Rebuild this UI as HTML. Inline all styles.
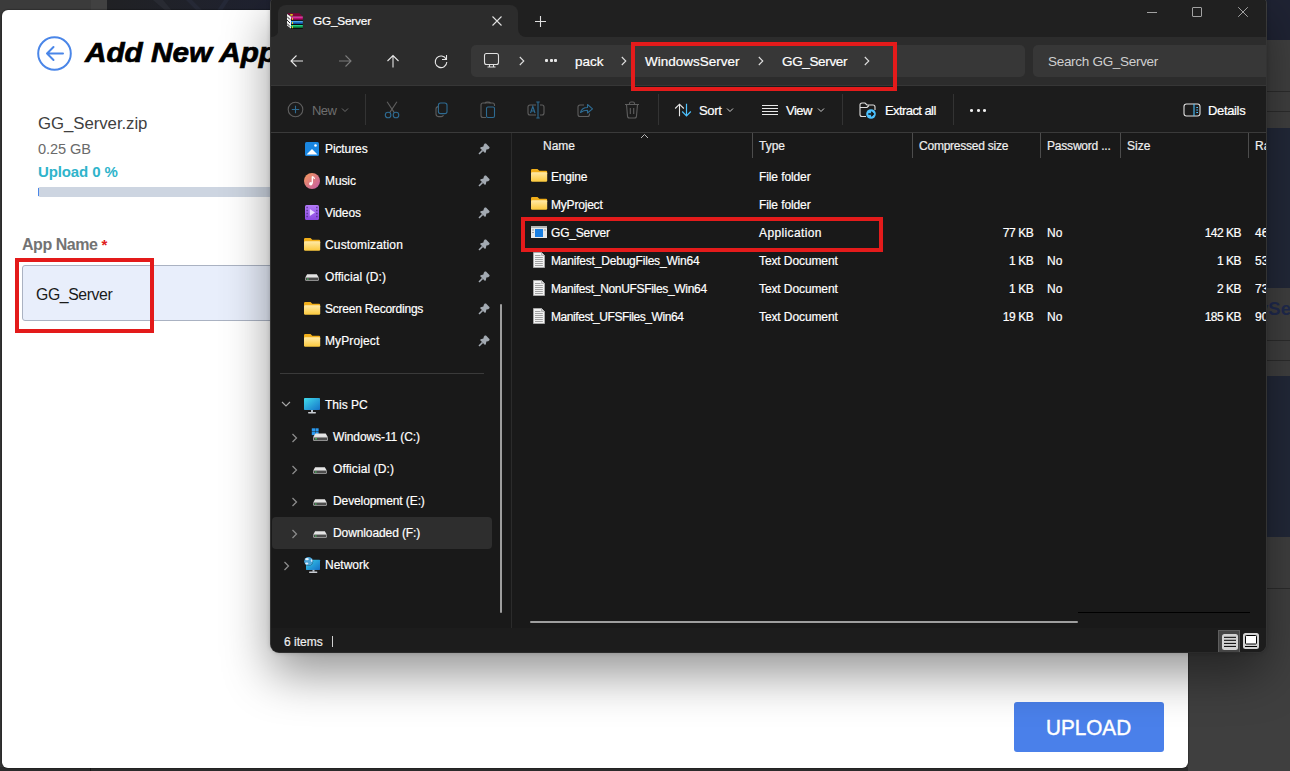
<!DOCTYPE html>
<html><head><meta charset="utf-8">
<style>
*{margin:0;padding:0;box-sizing:border-box}
html,body{width:1290px;height:771px;overflow:hidden;background:#3c3c3c;font-family:"Liberation Sans",sans-serif}
.a{position:absolute}
.t{position:absolute;white-space:nowrap;line-height:1}
#bgtop{left:107px;top:0;width:183px;height:20px;background:linear-gradient(90deg,#202124,#1f2232)}
#card{left:2px;top:10px;width:1186px;height:758px;background:#fff;border-radius:6px;overflow:hidden;box-shadow:0 0 1px 1px rgba(0,0,0,.22)}
#win{left:271px;top:-4px;width:995px;height:656px;background:#202020;border-radius:8px;overflow:hidden;box-shadow:0 22px 48px rgba(0,0,0,.42),0 0 5px rgba(0,0,0,.25),0 0 0 1px #484848}
.w{color:#fff;-webkit-text-stroke:0.2px #fff}
</style></head><body>
<!-- page background bits -->
<div class="a" style="left:0;top:10px;width:2px;height:761px;background:#353535"></div>
<div class="a" style="left:0;top:767px;width:1188px;height:4px;background:#2b2b2b"></div>
<div class="a" style="left:90px;top:767px;width:1px;height:4px;background:#1a1a1a"></div>
<div class="a" style="left:0;top:0;width:91px;height:12px;background:#3b3b3b"></div>
<div class="a" style="left:91px;top:0;width:16px;height:12px;background:#414141"></div>
<div class="a" id="bgtop"></div>
<div class="a" style="left:1188px;top:0;width:102px;height:771px;background:#3f3f3f"></div>
<div class="a" style="left:1266px;top:0;width:24px;height:40px;background:#1f2333"></div>
<div class="a" style="left:1266px;top:128px;width:24px;height:160px;background:#222838"></div>
<div class="a" style="left:1266px;top:376px;width:24px;height:161px;background:#222838"></div>
<div class="a" style="left:1266px;top:91px;width:24px;height:1px;background:#2c2c2c"></div>
<div class="a" style="left:1266px;top:111px;width:24px;height:1px;background:#2c2c2c"></div>
<div class="a" style="left:1266px;top:340px;width:24px;height:1px;background:#2c2c2c"></div>
<div class="a" style="left:1266px;top:360px;width:24px;height:1px;background:#2c2c2c"></div>
<div class="a" style="left:1266px;top:588px;width:24px;height:1px;background:#2c2c2c"></div>
<div class="t" style="left:1258px;top:300px;font-size:18.5px;font-weight:bold;color:#1f2a4e">ySe</div>
<svg class="a" style="left:107px;top:0" width="183" height="12" viewBox="0 0 183 12"><path d="M46 0H56L66 12H60Z" fill="#2a2d35" opacity="0.8"/><path d="M79 0H85L97 12H91Z" fill="#272a38" opacity="0.8"/><path d="M117 0H122L114 12H109Z" fill="#262a3a" opacity="0.8"/></svg>

<div class="a" id="card">
  <!-- back icon -->
  <svg class="a" style="left:35px;top:26px" width="36" height="36" viewBox="0 0 36 36">
    <circle cx="17.5" cy="17.5" r="16.3" fill="none" stroke="#4a86e8" stroke-width="2"/>
    <path d="M10 17.5H26M16.5 11L10 17.5L16.5 24" fill="none" stroke="#4a86e8" stroke-width="2" stroke-linecap="round" stroke-linejoin="round"/>
  </svg>
  <div class="t" style="left:83px;top:30px;font-size:27px;font-weight:bold;font-style:italic;color:#000;transform:scaleX(1.1);transform-origin:0 0;-webkit-text-stroke:0.7px #000">Add New App</div>
  <div class="t" style="left:36px;top:105.5px;font-size:16.8px;letter-spacing:-0.05px;color:#404040">GG_Server.zip</div>
  <div class="t" style="left:36px;top:131.5px;font-size:14.6px;letter-spacing:-0.1px;color:#6a6a6a">0.25 GB</div>
  <div class="t" style="left:36px;top:154px;font-size:15px;letter-spacing:-0.12px;font-weight:bold;color:#2fb4cb">Upload 0 %</div>
  <div class="a" style="left:36px;top:177px;width:300px;height:10px;background:#cdd5e1;border-radius:2px"></div>
  <div class="a" style="left:36px;top:178px;width:1.2px;height:8px;background:#4a86e8"></div>
  <div class="t" style="left:20px;top:227px;font-size:16px;letter-spacing:-0.45px;font-weight:bold;color:#737373">App Name <span style="color:#e02020;font-size:15px">*</span></div>
  <div class="a" style="left:20px;top:255px;width:400px;height:56px;background:#e8eefb;border:1px solid #aab2c2;border-radius:3px"></div>
  <div class="t" style="left:34px;top:277px;font-size:15.8px;letter-spacing:-0.4px;color:#1a1a1a">GG_Server</div>
  <div class="a" style="left:13px;top:248px;width:139px;height:75px;border:4px solid #e31a1a"></div>
  <div class="a" style="left:1012px;top:692px;width:150px;height:50px;background:#4a80ea;border-radius:3px"></div>
  <div class="t" style="left:1044px;top:706.5px;font-size:22.5px;color:#fff;-webkit-text-stroke:0.45px #fff;transform:scaleX(0.92);transform-origin:0 0">UPLOAD</div>
</div>

<div class="a" id="win"><div class="a" style="left:-271px;top:4px;width:1290px;height:771px">
<!-- title strip -->
<div class="a" style="left:270px;top:20px;width:996px;height:20px;background:#2c2c2c"></div>
<div class="a" style="left:270px;top:0;width:8.5px;height:37px;background:#202020;border-radius:0 0 8px 0"></div>
<div class="a" style="left:517.5px;top:0;width:749px;height:37px;background:#202020;border-radius:0 0 0 8px"></div>
<div class="a" style="left:270px;top:0;width:996px;height:5px;background:#202020"></div>
<div class="a" style="left:278px;top:5px;width:240px;height:33px;background:#2c2c2c;border-radius:8px 8px 0 0"></div>
<!-- tab icon winrar -->
<svg class="a" style="left:287px;top:13px" width="16" height="16" viewBox="0 0 16 16">
 <defs><linearGradient id="rp" x1="0" y1="0" x2="0" y2="1"><stop offset="0" stop-color="#ff70c8"/><stop offset="0.35" stop-color="#d01890"/><stop offset="1" stop-color="#700030"/></linearGradient>
 <linearGradient id="rb" x1="0" y1="0" x2="0" y2="1"><stop offset="0" stop-color="#80d0ff"/><stop offset="0.35" stop-color="#2080d8"/><stop offset="1" stop-color="#0a3a80"/></linearGradient>
 <linearGradient id="rg" x1="0" y1="0" x2="0" y2="1"><stop offset="0" stop-color="#40ffb0"/><stop offset="0.35" stop-color="#10b060"/><stop offset="1" stop-color="#085020"/></linearGradient></defs>
 <path d="M0.2 0.2H12.3L15.8 3.6H4Z" fill="#80003a"/>
 <ellipse cx="4.5" cy="1.8" rx="1.6" ry="0.9" fill="#d8d020"/>
 <rect x="4" y="3.6" width="11.8" height="3.4" fill="url(#rp)"/>
 <rect x="4" y="7" width="11.8" height="0.9" fill="#000"/>
 <rect x="4" y="7.9" width="11.8" height="3.3" fill="url(#rb)"/>
 <rect x="4" y="11.2" width="11.8" height="0.9" fill="#000"/>
 <rect x="4" y="12.1" width="11.8" height="3.2" fill="url(#rg)"/>
 <rect x="4" y="15.3" width="11.8" height="0.7" fill="#000"/>
 <path d="M0 1L4 3.8V15.5L0 12.5Z" fill="#f4f4f4"/>
 <path d="M0 3.5L3 6.5M0 7L3 10M0 10.5L3 13.5" stroke="#111" stroke-width="0.9"/>
 <path d="M5.5 4.8V6.8M5.5 9V11M5.5 13.2V15.2" stroke="#e8d020" stroke-width="1"/>
</svg>
<div class="t w" style="left:313px;top:16px;font-size:11.8px;letter-spacing:-0.2px">GG_Server</div>
<svg class="a" style="left:491px;top:15px" width="12" height="12" viewBox="0 0 12 12"><path d="M1.5 1.5L10.5 10.5M10.5 1.5L1.5 10.5" stroke="#e0e0e0" stroke-width="1.1"/></svg>
<svg class="a" style="left:534px;top:15px" width="13" height="13" viewBox="0 0 13 13"><path d="M6.5 1V12M1 6.5H12" stroke="#e0e0e0" stroke-width="1.1"/></svg>
<!-- window controls -->
<div class="a" style="left:1147px;top:12px;width:10px;height:1px;background:#a2a2a2"></div>
<div class="a" style="left:1192px;top:7px;width:10px;height:10px;border:1px solid #a2a2a2;border-radius:1px"></div>
<svg class="a" style="left:1237px;top:6px" width="12" height="12" viewBox="0 0 12 12"><path d="M1.2 1.2L10.8 10.8M10.8 1.2L1.2 10.8" stroke="#a2a2a2" stroke-width="1"/></svg>

<!-- nav row -->
<div class="a" style="left:270px;top:37px;width:996px;height:48px;background:#2c2c2c"></div>
<div class="a" style="left:270px;top:85px;width:996px;height:1px;background:#363636"></div>
<svg class="a" style="left:289px;top:53px" width="16" height="16" viewBox="0 0 16 16"><path d="M14 8H2.5M7.5 2.5L2 8L7.5 13.5" stroke="#e6e6e6" stroke-width="1.1" fill="none"/></svg>
<svg class="a" style="left:337px;top:53px" width="16" height="16" viewBox="0 0 16 16"><path d="M2 8H13.5M8.5 2.5L14 8L8.5 13.5" stroke="#7a7a7a" stroke-width="1.1" fill="none"/></svg>
<svg class="a" style="left:385px;top:53px" width="16" height="16" viewBox="0 0 16 16"><path d="M8 14.5V2.5M2.5 8L8 2.5L13.5 8" stroke="#e6e6e6" stroke-width="1.1" fill="none"/></svg>
<svg class="a" style="left:433px;top:52.5px" width="16" height="16" viewBox="0 0 16 16"><path d="M13.2 6.2A5.8 5.8 0 1 0 13.8 9" stroke="#e6e6e6" stroke-width="1.1" fill="none"/><path d="M13.5 2V6.5H9" stroke="#e6e6e6" stroke-width="1.1" fill="none"/></svg>
<!-- address -->
<div class="a" style="left:471px;top:45px;width:554px;height:32px;background:#373737;border-radius:5px"></div>
<svg class="a" style="left:483px;top:52px" width="17" height="17" viewBox="0 0 17 17"><rect x="1.5" y="1.5" width="14" height="11" rx="2" stroke="#e0e0e0" stroke-width="1.1" fill="none"/><path d="M6.5 12.5V14.5M10.5 12.5V14.5M4.5 15H12.5" stroke="#e0e0e0" stroke-width="1.1"/></svg>
<svg class="a" style="left:518px;top:56px" width="8" height="10" viewBox="0 0 8 10"><path d="M1.8 1L5.8 5L1.8 9" stroke="#e0e0e0" stroke-width="1.1" fill="none"/></svg>
<div class="a" style="left:545px;top:59px;width:3px;height:2.5px;background:#e8e8e8;border-radius:1px"></div>
<div class="a" style="left:549.5px;top:59px;width:3px;height:2.5px;background:#e8e8e8;border-radius:1px"></div>
<div class="a" style="left:554px;top:59px;width:3px;height:2.5px;background:#e8e8e8;border-radius:1px"></div>
<div class="t w" style="left:575px;top:55px;font-size:13.5px">pack</div>
<svg class="a" style="left:620px;top:56px" width="8" height="10" viewBox="0 0 8 10"><path d="M1.8 1L5.8 5L1.8 9" stroke="#e0e0e0" stroke-width="1.1" fill="none"/></svg>
<div class="t w" style="left:645px;top:55px;font-size:13.5px">WindowsServer</div>
<svg class="a" style="left:757px;top:56px" width="8" height="10" viewBox="0 0 8 10"><path d="M1.8 1L5.8 5L1.8 9" stroke="#e0e0e0" stroke-width="1.1" fill="none"/></svg>
<div class="t w" style="left:782px;top:55px;font-size:13.5px;letter-spacing:-0.35px">GG_Server</div>
<svg class="a" style="left:863px;top:56px" width="8" height="10" viewBox="0 0 8 10"><path d="M1.8 1L5.8 5L1.8 9" stroke="#e0e0e0" stroke-width="1.1" fill="none"/></svg>
<div class="a" style="left:1033px;top:45px;width:240px;height:32px;background:#373737;border-radius:5px"></div>
<div class="t" style="left:1048px;top:55px;font-size:13.5px;letter-spacing:-0.3px;color:#cfcfcf">Search GG_Server</div>

<!-- toolbar -->
<div class="a" style="left:270px;top:86px;width:996px;height:46px;background:#1c1c1c"></div>
<div class="a" style="left:270px;top:132px;width:996px;height:1px;background:#3a3a3a"></div>
<svg class="a" style="left:287px;top:101px" width="17" height="17" viewBox="0 0 17 17"><circle cx="8.5" cy="8.5" r="7.3" stroke="#5e5e5e" stroke-width="1.1" fill="none"/><path d="M8.5 4.8V12.2M4.8 8.5H12.2" stroke="#2e6b92" stroke-width="1.1"/></svg>
<div class="t" style="left:312px;top:104px;font-size:13px;letter-spacing:-0.55px;color:#6e6e6e">New</div>
<svg class="a" style="left:341px;top:106px" width="8" height="8" viewBox="0 0 8 8"><path d="M1 2.5L4 5.5L7 2.5" stroke="#6e6e6e" stroke-width="1" fill="none"/></svg>
<div class="a" style="left:365px;top:94px;width:1px;height:31px;background:#333"></div>
<svg class="a" style="left:384px;top:101px" width="17" height="18" viewBox="0 0 17 18"><path d="M3.1 0.8L10.3 11.6M12.9 0.8L5.7 11.6" stroke="#5e5e5e" stroke-width="1.1" fill="none"/><circle cx="4.1" cy="14" r="2.8" stroke="#2e6b92" stroke-width="1.1" fill="none"/><circle cx="12" cy="14" r="2.8" stroke="#2e6b92" stroke-width="1.1" fill="none"/></svg>
<svg class="a" style="left:432px;top:102px" width="16" height="16" viewBox="0 0 16 16"><path d="M6.3 4.6A2.5 2.5 0 0 0 4 7.1V12.1A2.5 2.5 0 0 0 6.5 14.6H9.2A2.5 2.5 0 0 0 11.5 13.2" stroke="#5e5e5e" stroke-width="1.1" fill="none"/><rect x="6.4" y="1" width="8.6" height="10.6" rx="2.2" stroke="#2e6b92" stroke-width="1.1" fill="none"/></svg>
<svg class="a" style="left:480px;top:101px" width="16" height="18" viewBox="0 0 16 18"><path d="M6 16.5H3A2 2 0 0 1 1 14.5V4A2 2 0 0 1 3 2H12.5A2 2 0 0 1 14.5 4V5" stroke="#5e5e5e" stroke-width="1.1" fill="none"/><path d="M5 2.2A2.8 1.3 0 0 1 10.5 2.2" stroke="#5e5e5e" stroke-width="1.1" fill="#1c1c1c"/><rect x="6.5" y="6" width="8" height="10.5" rx="1.5" stroke="#2e6b92" stroke-width="1.1" fill="none"/></svg>
<svg class="a" style="left:527px;top:101px" width="18" height="18" viewBox="0 0 18 18"><path d="M9 4H3A2 2 0 0 0 1 6V12A2 2 0 0 0 3 14H9M13 4H15A2 2 0 0 1 17 6V12A2 2 0 0 1 15 14H13" stroke="#5e5e5e" stroke-width="1.1" fill="none"/><path d="M11 1V17M9.3 1H12.7M9.3 17H12.7M3.5 12L5.8 5.5L8 12M4.3 10H7.3" stroke="#2e6b92" stroke-width="1.1" fill="none"/></svg>
<svg class="a" style="left:577px;top:102px" width="17" height="16" viewBox="0 0 17 16"><path d="M7 3H3A2 2 0 0 0 1 5V12.5A2 2 0 0 0 3 14.5H10.5A2 2 0 0 0 12.5 12.5V11.5" stroke="#5e5e5e" stroke-width="1.1" fill="none"/><path d="M3.5 10.5C4.5 6.5 7.5 5.5 10.5 5.5V2.5L15.5 6.8L10.5 11V8.3C7.8 8.3 5.5 9 3.5 10.5Z" stroke="#2e6b92" stroke-width="1.1" fill="none" stroke-linejoin="round"/></svg>
<svg class="a" style="left:624px;top:101px" width="16" height="18" viewBox="0 0 16 18"><path d="M1 3.5H15M5.5 3.5V2.5A1.5 1.5 0 0 1 7 1H9A1.5 1.5 0 0 1 10.5 2.5V3.5M2.5 3.5L3.5 15A2 2 0 0 0 5.5 17H10.5A2 2 0 0 0 12.5 15L13.5 3.5M6.3 7V13M9.7 7V13" stroke="#5e5e5e" stroke-width="1.1" fill="none"/></svg>
<div class="a" style="left:658px;top:94px;width:1px;height:31px;background:#333"></div>
<svg class="a" style="left:674px;top:103px" width="18" height="14" viewBox="0 0 18 14"><path d="M5.5 13.2V1.2M1.2 5.5L5.5 1.2L9.8 5.5" stroke="#e8e8e8" stroke-width="1.1" fill="none"/><path d="M12.5 0.8V12.8M8.2 8.5L12.5 12.8L16.8 8.5" stroke="#4cc2ff" stroke-width="1.2" fill="none"/></svg>
<div class="t w" style="left:699px;top:104px;font-size:13px;letter-spacing:-0.35px">Sort</div>
<svg class="a" style="left:726px;top:106px" width="8" height="8" viewBox="0 0 8 8"><path d="M1 2.5L4 5.5L7 2.5" stroke="#cfcfcf" stroke-width="1" fill="none"/></svg>
<svg class="a" style="left:762px;top:103px" width="16" height="14" viewBox="0 0 16 14"><path d="M0 2.5H16M0 5.5H16M0 8.5H16M0 11.5H16" stroke="#e8e8e8" stroke-width="1.1"/></svg>
<div class="t w" style="left:786px;top:104px;font-size:13px;letter-spacing:-0.55px">View</div>
<svg class="a" style="left:817px;top:106px" width="8" height="8" viewBox="0 0 8 8"><path d="M1 2.5L4 5.5L7 2.5" stroke="#cfcfcf" stroke-width="1" fill="none"/></svg>
<div class="a" style="left:842px;top:94px;width:1px;height:31px;background:#333"></div>
<svg class="a" style="left:859px;top:102px" width="18" height="17" viewBox="0 0 18 17"><path d="M7 14.5H3A2 2 0 0 1 1 12.5V3A2 2 0 0 1 3 1H6L8 3H14A2 2 0 0 1 16 5V8" stroke="#e0e0e0" stroke-width="1.1" fill="none"/><path d="M1 5.5H8L10 3.5" stroke="#e0e0e0" stroke-width="1.1" fill="none"/><circle cx="12" cy="12" r="4.8" fill="#4cc2ff"/><path d="M9.3 12H14.2M12.2 9.8L14.4 12L12.2 14.2" stroke="#111" stroke-width="1.4" fill="none"/></svg>
<div class="t w" style="left:885px;top:104px;font-size:13px;letter-spacing:-0.58px">Extract all</div>
<div class="a" style="left:953px;top:94px;width:1px;height:31px;background:#333"></div>
<div class="a" style="left:970px;top:109.3px;width:3.3px;height:3px;background:#f0f0f0;border-radius:50%"></div>
<div class="a" style="left:976.5px;top:109.3px;width:3.3px;height:3px;background:#f0f0f0;border-radius:50%"></div>
<div class="a" style="left:983px;top:109.3px;width:3.3px;height:3px;background:#f0f0f0;border-radius:50%"></div>
<svg class="a" style="left:1183px;top:102px" width="18" height="16" viewBox="0 0 18 16"><rect x="1" y="2" width="16" height="12" rx="2.5" stroke="#e0e0e0" stroke-width="1.1" fill="none"/><path d="M11 2V14" stroke="#4cc2ff" stroke-width="1.1"/><path d="M13.3 5.5H15M13.3 8H15M13.3 10.5H15" stroke="#4cc2ff" stroke-width="1"/></svg>
<div class="t w" style="left:1208px;top:104px;font-size:13px;letter-spacing:-0.35px">Details</div>

<!-- content -->
<div class="a" style="left:270px;top:133px;width:996px;height:495px;background:#191919"></div>
<div class="a" style="left:511px;top:133px;width:1px;height:495px;background:#2b2b2b"></div>
<div class="a" style="left:499.5px;top:304px;width:2.5px;height:309px;background:#9e9e9e;border-radius:1px"></div>
<svg width="0" height="0" style="position:absolute"><defs><linearGradient id="fg" x1="0" y1="0" x2="0" y2="1"><stop offset="0" stop-color="#ffeaa8"/><stop offset="1" stop-color="#fbc83a"/></linearGradient><linearGradient id="mg" x1="0" y1="0" x2="1" y2="1"><stop offset="0" stop-color="#f59a5a"/><stop offset="1" stop-color="#c25aa8"/></linearGradient></defs></svg>
<svg class="a" style="left:305px;top:142px" width="14" height="14" viewBox="0 0 14 14"><rect x="0" y="0" width="14" height="14" rx="1.5" fill="#1a86e0"/><path d="M1.5 12.5L7 7L12.5 12.5Z" fill="#fff"/><circle cx="10.5" cy="3.5" r="1.3" fill="#fff"/></svg>
<div class="t w" style="left:325px;top:143px;font-size:12px;letter-spacing:-0.1px">Pictures</div>
<svg class="a" style="left:478px;top:143px" width="12" height="12" viewBox="0 0 12 12"><path d="M6.8 0.6Q7.4 0.2 8 0.6L11.4 4Q11.8 4.6 11.4 5.2L10.2 6.2L8.4 6.6L7.8 9.2L7 10L2 5L2.8 4.2L5.4 3.6L5.8 1.8Z" fill="#a3aab2"/><path d="M4.6 7.4L1 11" stroke="#a3aab2" stroke-width="1.5"/></svg>
<svg class="a" style="left:304px;top:173px" width="16" height="16" viewBox="0 0 16 16"><circle cx="8" cy="8" r="8" fill="url(#mg)"/><path d="M8.3 3.5V10.5" stroke="#fff" stroke-width="1.3"/><path d="M8.3 3.5Q10 4 10.5 6" stroke="#fff" stroke-width="1.2" fill="none"/><circle cx="6.8" cy="10.8" r="1.7" fill="#fff"/></svg>
<div class="t w" style="left:325px;top:175px;font-size:12px;letter-spacing:-0.1px">Music</div>
<svg class="a" style="left:478px;top:175px" width="12" height="12" viewBox="0 0 12 12"><path d="M6.8 0.6Q7.4 0.2 8 0.6L11.4 4Q11.8 4.6 11.4 5.2L10.2 6.2L8.4 6.6L7.8 9.2L7 10L2 5L2.8 4.2L5.4 3.6L5.8 1.8Z" fill="#a3aab2"/><path d="M4.6 7.4L1 11" stroke="#a3aab2" stroke-width="1.5"/></svg>
<svg class="a" style="left:305px;top:205px" width="14" height="15" viewBox="0 0 14 15"><defs><linearGradient id="vg" x1="0" y1="0" x2="0" y2="1"><stop offset="0" stop-color="#b27af8"/><stop offset="1" stop-color="#8a48e0"/></linearGradient></defs><rect x="0" y="0" width="14" height="15" rx="1.5" fill="url(#vg)"/><path d="M4.8 4L10 7.5L4.8 11Z" fill="#e8dcff"/><path d="M1.6 2.5H2.6M1.6 5.5H2.6M1.6 8.5H2.6M1.6 11.5H2.6M11.4 2.5H12.4M11.4 5.5H12.4M11.4 8.5H12.4M11.4 11.5H12.4" stroke="#3c2270" stroke-width="1.4"/></svg>
<div class="t w" style="left:325px;top:207px;font-size:12px;letter-spacing:-0.1px">Videos</div>
<svg class="a" style="left:478px;top:207px" width="12" height="12" viewBox="0 0 12 12"><path d="M6.8 0.6Q7.4 0.2 8 0.6L11.4 4Q11.8 4.6 11.4 5.2L10.2 6.2L8.4 6.6L7.8 9.2L7 10L2 5L2.8 4.2L5.4 3.6L5.8 1.8Z" fill="#a3aab2"/><path d="M4.6 7.4L1 11" stroke="#a3aab2" stroke-width="1.5"/></svg>
<svg class="a" style="left:304px;top:238px" width="17" height="14" viewBox="0 0 17 14"><path d="M0 1.2A1.2 1.2 0 0 1 1.2 0H6.5L8.3 1.8H15A1.2 1.2 0 0 1 16.2 3V5H0Z" fill="#f0ae1a"/><rect x="0" y="3.2" width="16.2" height="9.6" rx="1.2" fill="url(#fg)"/></svg>
<div class="t w" style="left:325px;top:239px;font-size:12px;letter-spacing:0.15px">Customization</div>
<svg class="a" style="left:478px;top:239px" width="12" height="12" viewBox="0 0 12 12"><path d="M6.8 0.6Q7.4 0.2 8 0.6L11.4 4Q11.8 4.6 11.4 5.2L10.2 6.2L8.4 6.6L7.8 9.2L7 10L2 5L2.8 4.2L5.4 3.6L5.8 1.8Z" fill="#a3aab2"/><path d="M4.6 7.4L1 11" stroke="#a3aab2" stroke-width="1.5"/></svg>
<svg class="a" style="left:305px;top:274px" width="14" height="7" viewBox="0 0 15 8" preserveAspectRatio="none"><path d="M2.3 0.3H12.7L14.7 4H0.3Z" fill="#e4e4e4"/><rect x="0.3" y="3.8" width="14.4" height="3.9" rx="0.9" fill="#d0d0d0"/><rect x="1" y="4.4" width="13" height="2.7" rx="0.4" fill="#4c4c4c"/><rect x="2.2" y="5.2" width="1.6" height="1.1" fill="#40e060"/></svg>
<div class="t w" style="left:325px;top:271px;font-size:12px;letter-spacing:0.1px">Official (D:)</div>
<svg class="a" style="left:478px;top:271px" width="12" height="12" viewBox="0 0 12 12"><path d="M6.8 0.6Q7.4 0.2 8 0.6L11.4 4Q11.8 4.6 11.4 5.2L10.2 6.2L8.4 6.6L7.8 9.2L7 10L2 5L2.8 4.2L5.4 3.6L5.8 1.8Z" fill="#a3aab2"/><path d="M4.6 7.4L1 11" stroke="#a3aab2" stroke-width="1.5"/></svg>
<svg class="a" style="left:304px;top:302px" width="17" height="14" viewBox="0 0 17 14"><path d="M0 1.2A1.2 1.2 0 0 1 1.2 0H6.5L8.3 1.8H15A1.2 1.2 0 0 1 16.2 3V5H0Z" fill="#f0ae1a"/><rect x="0" y="3.2" width="16.2" height="9.6" rx="1.2" fill="url(#fg)"/></svg>
<div class="t w" style="left:325px;top:303px;font-size:12px;letter-spacing:-0.23px">Screen Recordings</div>
<svg class="a" style="left:478px;top:303px" width="12" height="12" viewBox="0 0 12 12"><path d="M6.8 0.6Q7.4 0.2 8 0.6L11.4 4Q11.8 4.6 11.4 5.2L10.2 6.2L8.4 6.6L7.8 9.2L7 10L2 5L2.8 4.2L5.4 3.6L5.8 1.8Z" fill="#a3aab2"/><path d="M4.6 7.4L1 11" stroke="#a3aab2" stroke-width="1.5"/></svg>
<svg class="a" style="left:304px;top:334px" width="17" height="14" viewBox="0 0 17 14"><path d="M0 1.2A1.2 1.2 0 0 1 1.2 0H6.5L8.3 1.8H15A1.2 1.2 0 0 1 16.2 3V5H0Z" fill="#f0ae1a"/><rect x="0" y="3.2" width="16.2" height="9.6" rx="1.2" fill="url(#fg)"/></svg>
<div class="t w" style="left:325px;top:335px;font-size:12px;letter-spacing:0.12px">MyProject</div>
<svg class="a" style="left:478px;top:335px" width="12" height="12" viewBox="0 0 12 12"><path d="M6.8 0.6Q7.4 0.2 8 0.6L11.4 4Q11.8 4.6 11.4 5.2L10.2 6.2L8.4 6.6L7.8 9.2L7 10L2 5L2.8 4.2L5.4 3.6L5.8 1.8Z" fill="#a3aab2"/><path d="M4.6 7.4L1 11" stroke="#a3aab2" stroke-width="1.5"/></svg>
<div class="a" style="left:280px;top:373px;width:204px;height:1px;background:#3a3a3a"></div>
<svg class="a" style="left:281px;top:400px" width="10" height="8" viewBox="0 0 10 8"><path d="M1 2L5 6L9 2" stroke="#a8a8a8" stroke-width="1.1" fill="none"/></svg>
<svg class="a" style="left:304px;top:398px" width="16" height="16" viewBox="0 0 16 16"><defs><linearGradient id="pcg" x1="0" y1="0" x2="1" y2="1"><stop offset="0" stop-color="#40dcec"/><stop offset="1" stop-color="#1572c8"/></linearGradient></defs><rect x="0" y="0" width="16" height="12" rx="0.8" fill="url(#pcg)"/><rect x="7" y="12" width="2" height="2.2" fill="#b8c0c8"/><rect x="4" y="14" width="8" height="1.4" rx="0.7" fill="#c8ccd2"/></svg>
<div class="t w" style="left:325px;top:399px;font-size:12px">This PC</div>
<div class="a" style="left:272px;top:517px;width:220px;height:31.5px;background:#2e2e2e;border-radius:4px"></div>
<svg class="a" style="left:291px;top:432.5px" width="7" height="10" viewBox="0 0 7 10"><path d="M1.5 1L5.5 5L1.5 9" stroke="#8c8c8c" stroke-width="1.25" fill="none"/></svg>
<svg class="a" style="left:311px;top:428px" width="17" height="14" viewBox="0 0 17 14"><rect x="0.8" y="0.3" width="3.2" height="3.2" fill="#2a9af0"/><rect x="4.4" y="0.3" width="3.2" height="3.2" fill="#2a9af0"/><rect x="0.8" y="3.9" width="3.2" height="3.2" fill="#2a9af0"/><rect x="4.4" y="3.9" width="3.2" height="3.2" fill="#2a9af0"/><path d="M4.3 5.5H14.7L16.7 9H2.3Z" fill="#e4e4e4"/><rect x="2.3" y="8.8" width="14.4" height="4.2" rx="0.9" fill="#d0d0d0"/><rect x="3" y="9.4" width="13" height="3" rx="0.4" fill="#4c4c4c"/><rect x="4.2" y="10.2" width="1.6" height="1.2" fill="#40e060"/></svg>
<div class="t w" style="left:333px;top:431px;font-size:12px;letter-spacing:-0.1px">Windows-11 (C:)</div>
<svg class="a" style="left:291px;top:464.5px" width="7" height="10" viewBox="0 0 7 10"><path d="M1.5 1L5.5 5L1.5 9" stroke="#8c8c8c" stroke-width="1.25" fill="none"/></svg>
<svg class="a" style="left:313px;top:467px" width="14" height="7" viewBox="0 0 15 8" preserveAspectRatio="none"><path d="M2.3 0.3H12.7L14.7 4H0.3Z" fill="#e4e4e4"/><rect x="0.3" y="3.8" width="14.4" height="3.9" rx="0.9" fill="#d0d0d0"/><rect x="1" y="4.4" width="13" height="2.7" rx="0.4" fill="#4c4c4c"/><rect x="2.2" y="5.2" width="1.6" height="1.1" fill="#40e060"/></svg>
<div class="t w" style="left:333px;top:463px;font-size:12px;letter-spacing:0.1px">Official (D:)</div>
<svg class="a" style="left:291px;top:496.5px" width="7" height="10" viewBox="0 0 7 10"><path d="M1.5 1L5.5 5L1.5 9" stroke="#8c8c8c" stroke-width="1.25" fill="none"/></svg>
<svg class="a" style="left:313px;top:499px" width="14" height="7" viewBox="0 0 15 8" preserveAspectRatio="none"><path d="M2.3 0.3H12.7L14.7 4H0.3Z" fill="#e4e4e4"/><rect x="0.3" y="3.8" width="14.4" height="3.9" rx="0.9" fill="#d0d0d0"/><rect x="1" y="4.4" width="13" height="2.7" rx="0.4" fill="#4c4c4c"/><rect x="2.2" y="5.2" width="1.6" height="1.1" fill="#40e060"/></svg>
<div class="t w" style="left:333px;top:495px;font-size:12px;letter-spacing:-0.1px">Development (E:)</div>
<svg class="a" style="left:291px;top:528.5px" width="7" height="10" viewBox="0 0 7 10"><path d="M1.5 1L5.5 5L1.5 9" stroke="#8c8c8c" stroke-width="1.25" fill="none"/></svg>
<svg class="a" style="left:313px;top:531px" width="14" height="7" viewBox="0 0 15 8" preserveAspectRatio="none"><path d="M2.3 0.3H12.7L14.7 4H0.3Z" fill="#e4e4e4"/><rect x="0.3" y="3.8" width="14.4" height="3.9" rx="0.9" fill="#d0d0d0"/><rect x="1" y="4.4" width="13" height="2.7" rx="0.4" fill="#4c4c4c"/><rect x="2.2" y="5.2" width="1.6" height="1.1" fill="#40e060"/></svg>
<div class="t w" style="left:333px;top:527px;font-size:12px;letter-spacing:-0.1px">Downloaded (F:)</div>
<svg class="a" style="left:283px;top:560.5px" width="7" height="10" viewBox="0 0 7 10"><path d="M1.5 1L5.5 5L1.5 9" stroke="#8c8c8c" stroke-width="1.25" fill="none"/></svg>
<svg class="a" style="left:303px;top:556px" width="18" height="18" viewBox="0 0 18 18"><defs><linearGradient id="ng" x1="0" y1="0" x2="1" y2="1"><stop offset="0" stop-color="#38d0ea"/><stop offset="1" stop-color="#1570c8"/></linearGradient></defs><rect x="3" y="3.7" width="14" height="10.2" rx="0.6" fill="url(#ng)"/><rect x="9.5" y="13.9" width="2" height="1.8" fill="#b8c0c8"/><rect x="6" y="15.6" width="8.4" height="1.4" rx="0.7" fill="#c8ccd2"/><circle cx="5.5" cy="5.3" r="4.7" fill="#121212" opacity="0.5"/><circle cx="5.5" cy="5.3" r="4.3" fill="#4aa4d8"/><ellipse cx="4" cy="3.2" rx="1.8" ry="1.1" fill="#e8f4ff"/><ellipse cx="3.8" cy="7.5" rx="1.6" ry="1" fill="#d8ecff"/><ellipse cx="8.6" cy="4.6" rx="0.8" ry="1.4" fill="#cfe6ff"/></svg>
<div class="t w" style="left:325px;top:559px;font-size:12px">Network</div>
<div class="t w" style="left:543px;top:140px;font-size:12px;color:#e8e8e8">Name</div>
<svg class="a" style="left:640px;top:132.5px" width="9" height="6" viewBox="0 0 9 6"><path d="M1 5L4.5 1.5L8 5" stroke="#b8b8b8" stroke-width="1" fill="none"/></svg>
<div class="a" style="left:752px;top:133px;width:1px;height:25px;background:#4c4c4c"></div>
<div class="a" style="left:912px;top:133px;width:1px;height:25px;background:#4c4c4c"></div>
<div class="a" style="left:1040px;top:133px;width:1px;height:25px;background:#4c4c4c"></div>
<div class="a" style="left:1120px;top:133px;width:1px;height:25px;background:#4c4c4c"></div>
<div class="a" style="left:1248px;top:133px;width:1px;height:25px;background:#4c4c4c"></div>
<div class="t w" style="left:759px;top:140px;font-size:12px;color:#e8e8e8">Type</div>
<div class="t w" style="left:919px;top:140px;font-size:12px;letter-spacing:-0.23px;color:#e8e8e8">Compressed size</div>
<div class="t w" style="left:1047px;top:140px;font-size:12px;letter-spacing:-0.2px;color:#e8e8e8">Password ...</div>
<div class="t w" style="left:1127px;top:140px;font-size:12px;color:#e8e8e8">Size</div>
<div class="t w" style="left:1255px;top:140px;font-size:12px;color:#e8e8e8">Ra</div>
<svg class="a" style="left:531px;top:169px" width="17" height="14" viewBox="0 0 17 14"><path d="M0 1.2A1.2 1.2 0 0 1 1.2 0H6.5L8.3 1.8H15A1.2 1.2 0 0 1 16.2 3V5H0Z" fill="#f0ae1a"/><rect x="0" y="3.2" width="16.2" height="9.6" rx="1.2" fill="url(#fg)"/></svg>
<div class="t w" style="left:551px;top:171px;font-size:12px;letter-spacing:-0.2px">Engine</div>
<div class="t w" style="left:759px;top:171px;font-size:12px;letter-spacing:-0.1px">File folder</div>
<svg class="a" style="left:531px;top:197px" width="17" height="14" viewBox="0 0 17 14"><path d="M0 1.2A1.2 1.2 0 0 1 1.2 0H6.5L8.3 1.8H15A1.2 1.2 0 0 1 16.2 3V5H0Z" fill="#f0ae1a"/><rect x="0" y="3.2" width="16.2" height="9.6" rx="1.2" fill="url(#fg)"/></svg>
<div class="t w" style="left:551px;top:199px;font-size:12px;letter-spacing:-0.2px">MyProject</div>
<div class="t w" style="left:759px;top:199px;font-size:12px;letter-spacing:-0.1px">File folder</div>
<svg class="a" style="left:531px;top:226px" width="16" height="12" viewBox="0 0 16 12"><rect x="0" y="0" width="16" height="12" fill="#e8e8e8"/><rect x="0" y="0" width="16" height="2" fill="#b8b8b8"/><rect x="4" y="3" width="8" height="8" fill="#1a7ee0"/><rect x="1" y="3.5" width="2" height="1" fill="#999"/><rect x="1" y="6" width="2" height="1" fill="#999"/><rect x="13" y="3.5" width="2" height="1" fill="#999"/></svg>
<div class="t w" style="left:551px;top:227px;font-size:12px;letter-spacing:-0.2px">GG_Server</div>
<div class="t w" style="left:759px;top:227px;font-size:12px;letter-spacing:0.38px">Application</div>
<div class="t w" style="right:256.6px;top:227px;font-size:12px;letter-spacing:-0.4px">77 KB</div>
<div class="t w" style="left:1047px;top:227px;font-size:12px">No</div>
<div class="t w" style="right:49px;top:227px;font-size:12px;letter-spacing:-0.5px">142 KB</div>
<div class="t w" style="left:1255px;top:227px;font-size:12px">46</div>
<svg class="a" style="left:533px;top:252px" width="12" height="16" viewBox="0 0 12 16"><path d="M0.5 0.5H8.5L11.5 3.5V15.5H0.5Z" fill="#f2f2f2" stroke="#a8a8a8" stroke-width="1"/><path d="M8.5 0.5V3.5H11.5" fill="#d8d8d8" stroke="#a8a8a8" stroke-width="0.8"/><path d="M2 3.5H7.5M2 5.5H9.8M2 7.5H9.8M2 9.5H9.8M2 11.5H9.8M2 13.5H9.8" stroke="#9a9a9a" stroke-width="0.9"/></svg>
<div class="t w" style="left:551px;top:255px;font-size:12px;letter-spacing:-0.2px">Manifest_DebugFiles_Win64</div>
<div class="t w" style="left:759px;top:255px;font-size:12px;letter-spacing:-0.1px">Text Document</div>
<div class="t w" style="right:256.6px;top:255px;font-size:12px;letter-spacing:-0.4px">1 KB</div>
<div class="t w" style="left:1047px;top:255px;font-size:12px">No</div>
<div class="t w" style="right:49px;top:255px;font-size:12px;letter-spacing:-0.5px">1 KB</div>
<div class="t w" style="left:1255px;top:255px;font-size:12px">53</div>
<svg class="a" style="left:533px;top:280px" width="12" height="16" viewBox="0 0 12 16"><path d="M0.5 0.5H8.5L11.5 3.5V15.5H0.5Z" fill="#f2f2f2" stroke="#a8a8a8" stroke-width="1"/><path d="M8.5 0.5V3.5H11.5" fill="#d8d8d8" stroke="#a8a8a8" stroke-width="0.8"/><path d="M2 3.5H7.5M2 5.5H9.8M2 7.5H9.8M2 9.5H9.8M2 11.5H9.8M2 13.5H9.8" stroke="#9a9a9a" stroke-width="0.9"/></svg>
<div class="t w" style="left:551px;top:283px;font-size:12px;letter-spacing:-0.32px">Manifest_NonUFSFiles_Win64</div>
<div class="t w" style="left:759px;top:283px;font-size:12px;letter-spacing:-0.1px">Text Document</div>
<div class="t w" style="right:256.6px;top:283px;font-size:12px;letter-spacing:-0.4px">1 KB</div>
<div class="t w" style="left:1047px;top:283px;font-size:12px">No</div>
<div class="t w" style="right:49px;top:283px;font-size:12px;letter-spacing:-0.5px">2 KB</div>
<div class="t w" style="left:1255px;top:283px;font-size:12px">73</div>
<svg class="a" style="left:533px;top:308px" width="12" height="16" viewBox="0 0 12 16"><path d="M0.5 0.5H8.5L11.5 3.5V15.5H0.5Z" fill="#f2f2f2" stroke="#a8a8a8" stroke-width="1"/><path d="M8.5 0.5V3.5H11.5" fill="#d8d8d8" stroke="#a8a8a8" stroke-width="0.8"/><path d="M2 3.5H7.5M2 5.5H9.8M2 7.5H9.8M2 9.5H9.8M2 11.5H9.8M2 13.5H9.8" stroke="#9a9a9a" stroke-width="0.9"/></svg>
<div class="t w" style="left:551px;top:311px;font-size:12px;letter-spacing:-0.42px">Manifest_UFSFiles_Win64</div>
<div class="t w" style="left:759px;top:311px;font-size:12px;letter-spacing:-0.1px">Text Document</div>
<div class="t w" style="right:256.6px;top:311px;font-size:12px;letter-spacing:-0.4px">19 KB</div>
<div class="t w" style="left:1047px;top:311px;font-size:12px">No</div>
<div class="t w" style="right:49px;top:311px;font-size:12px;letter-spacing:-0.5px">185 KB</div>
<div class="t w" style="left:1255px;top:311px;font-size:12px">90</div>
<div class="a" style="left:530px;top:621px;width:548px;height:2px;background:#9e9e9e;border-radius:1px"></div>
<div class="a" style="left:1078px;top:612px;width:172px;height:1px;background:#000"></div>
<!-- status -->
<div class="a" style="left:270px;top:628px;width:996px;height:25px;background:#1c1c1c"></div>
<div class="t w" style="left:284px;top:636px;font-size:12px;color:#e6e6e6">6 items</div>
<div class="a" style="left:332px;top:636px;width:1px;height:11px;background:#d0d0d0"></div>
<div class="a" style="left:1218px;top:630px;width:22px;height:23px;background:#454545;border:1px solid #5e5e5e"></div>
<svg class="a" style="left:1222px;top:634px" width="16" height="16" viewBox="0 0 16 16"><rect x="0" y="0" width="16" height="16" rx="2.5" fill="#d2d2d2"/><path d="M2 3.3H14M2 6.3H14M2 9.4H14M2 12.4H14" stroke="#000" stroke-width="1"/></svg>
<svg class="a" style="left:1243px;top:633px" width="16" height="16" viewBox="0 0 16 16"><rect x="0" y="0" width="16" height="16" rx="2.5" fill="#d2d2d2"/><rect x="2.5" y="2.5" width="11" height="8.5" rx="0.8" fill="#fff" stroke="#000" stroke-width="1"/><path d="M2 13.5H14" stroke="#000" stroke-width="1"/></svg>
<div class="a" style="left:631px;top:42px;width:266px;height:49px;border:4.5px solid #e41b1b"></div>
<div class="a" style="left:520.5px;top:217px;width:362.5px;height:35px;border:4.5px solid #e41b1b"></div>
</div></div>
</body></html>
